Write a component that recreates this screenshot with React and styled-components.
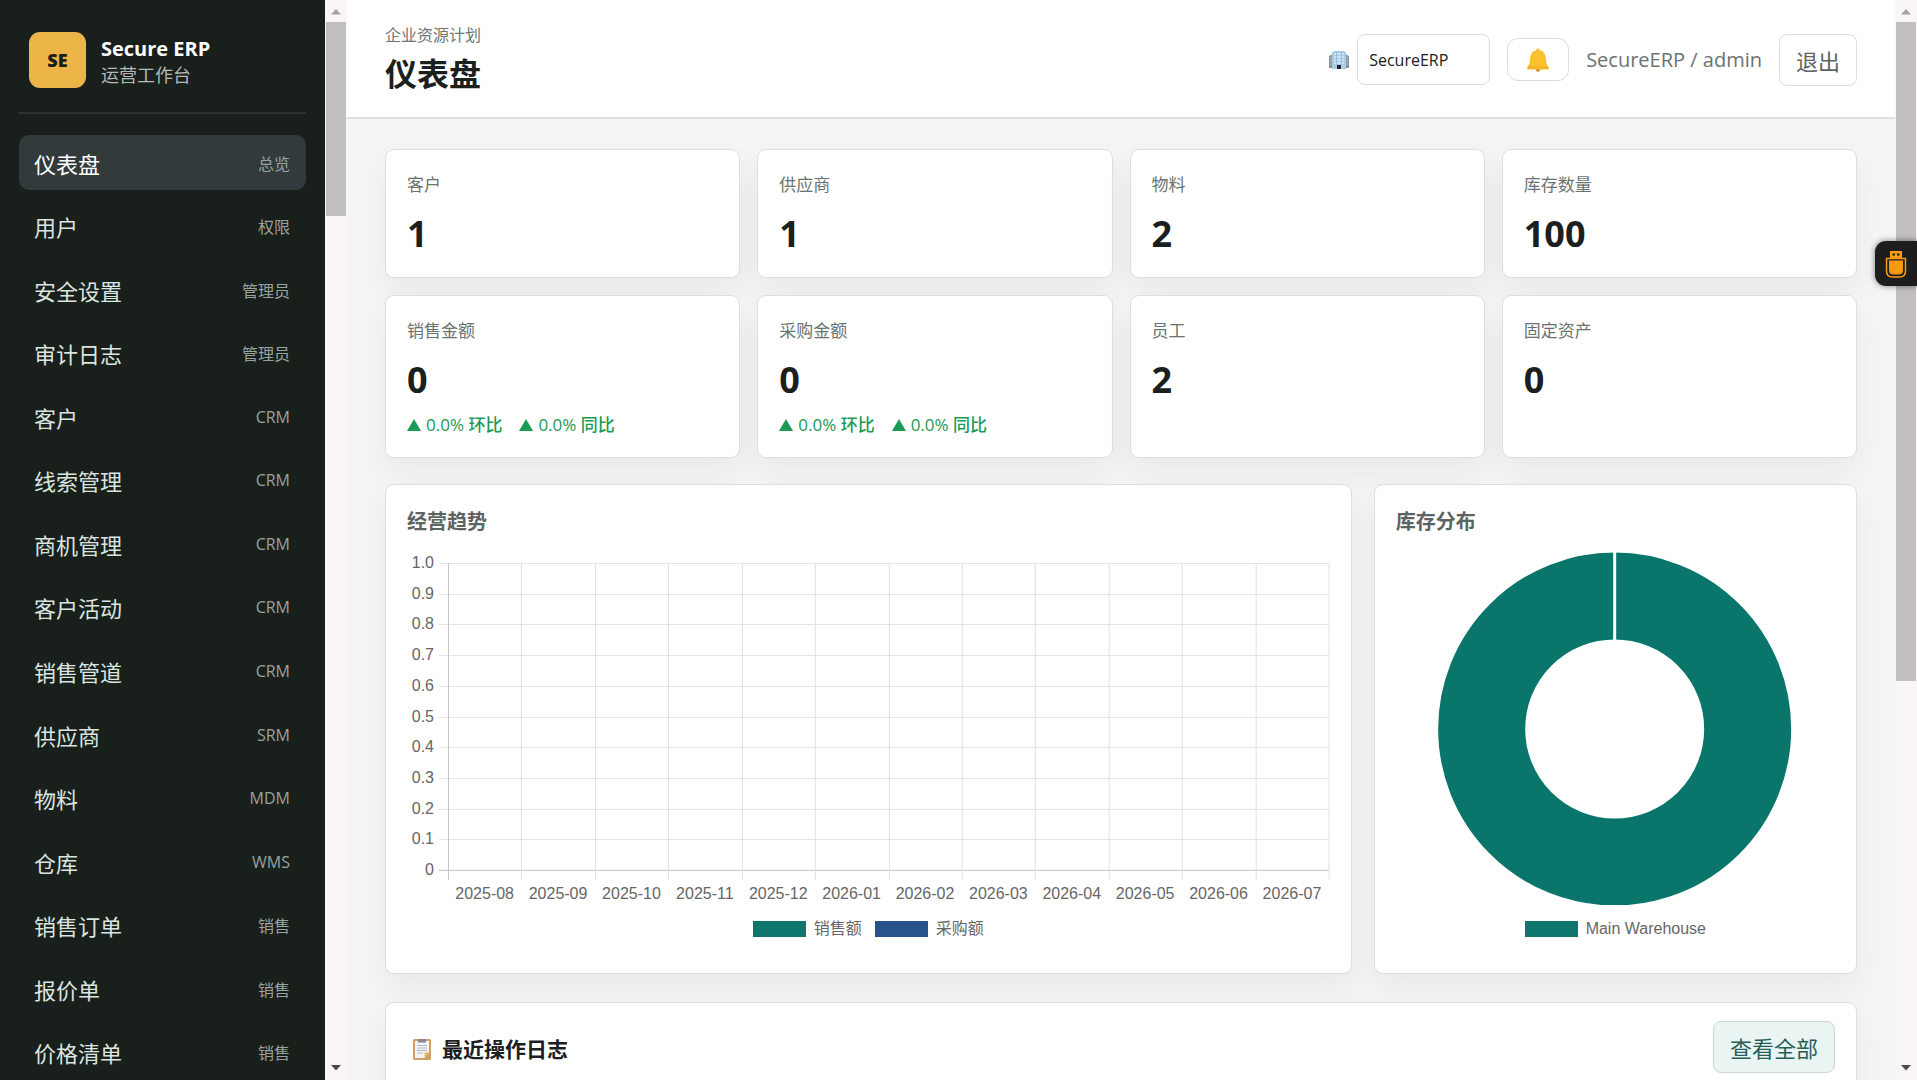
import React, { useState } from 'react';
import styled, { createGlobalStyle } from 'styled-components';

const GlobalStyle = createGlobalStyle`
  * {
    box-sizing: border-box;
  }

  body {
    margin: 0;
    background-color: #f6f5f6;
    color: #1b201e;
    font-family: 'Open Sans', 'Noto Sans CJK SC', sans-serif;
    font-size: 17px;
  }

  button,
  select {
    font-family: inherit;
  }
`;

const Shell = styled.div`
  display: flex;
  height: 100vh;
  overflow: hidden;
`;

const Sidebar = styled.aside`
  display: flex;
  flex-direction: column;
  flex: 0 0 325px;
  padding: 0 19px;
  background-color: #191f1a;
  overflow-y: auto;
  scrollbar-width: none;
`;

const Brand = styled.div`
  display: flex;
  align-items: center;
  gap: 15px;
  padding: 32px 10px 24px;
  border-bottom: 2px solid #2d332e;
  margin-bottom: 21px;
`;

const BrandMark = styled.div`
  display: flex;
  align-items: center;
  justify-content: center;
  width: 57px;
  height: 56px;
  border-radius: 11px;
  background-color: #edb548;
  color: #191f1a;
  font-size: 18px;
  font-weight: 800;
`;

const BrandText = styled.div`
  padding-top: 3px;
`;

const BrandName = styled.div`
  color: #fff;
  font-size: 20px;
  font-weight: 700;
  line-height: 27px;
`;

const BrandNote = styled.div`
  color: #b3bab6;
  font-size: 18px;
  line-height: 26px;
`;

const Nav = styled.nav`
  display: flex;
  flex: 1;
  flex-direction: column;
  justify-content: space-between;
`;

const NavItem = styled.a`
  display: flex;
  flex: 0 0 55px;
  align-items: center;
  justify-content: space-between;
  padding: 0 16px 0 15px;
  border-radius: 10px;
  background-color: ${({ $active }) => ($active ? '#333a3c' : 'transparent')};
  color: ${({ $active }) => ($active ? '#fff' : '#dbe5e0')};
  font-size: 22px;
  text-decoration: none;
`;

const NavTag = styled.span`
  color: #99a39e;
  font-size: 16px;
`;

const Track = styled.div`
  display: flex;
  flex: 0 0 22px;
  flex-direction: column;
  align-items: center;
  justify-content: space-between;
  background-color: #f9f5f9;
`;

const Thumb = styled.div`
  flex: 0 0 ${({ $size }) => $size};
  width: 20px;
  margin-bottom: auto;
  background-color: #c1bfc2;
`;

const Arrow = styled.svg`
  flex: 0 0 22px;
  width: 12px;
`;

const Main = styled.main`
  flex: 1;
  min-width: 0;
  overflow-y: auto;
  scrollbar-width: none;
`;

const Header = styled.header`
  display: flex;
  align-items: center;
  justify-content: space-between;
  height: 119px;
  padding: 0 38px;
  border-bottom: 2px solid #dfdfdf;
  background-color: #fff;
`;

const Eyebrow = styled.div`
  color: #6f7673;
  font-size: 16px;
  line-height: 24px;
`;

const PageTitle = styled.h1`
  margin: 6px 0 0;
  font-size: 32px;
  font-weight: 700;
  line-height: 42px;
`;

const Tools = styled.div`
  display: flex;
  align-items: center;
  gap: 17px;
  padding-top: 2px;
`;

const Company = styled.label`
  display: flex;
  align-items: center;
  gap: 8px;
`;

const CompanySelect = styled.select`
  width: 133px;
  height: 51px;
  padding: 0 11px;
  border: 1px solid #dcdcdc;
  border-radius: 8px;
  background-color: #fff;
  color: #1b201e;
  font-size: 16px;
  appearance: none;
`;

const Button = styled.button`
  display: flex;
  align-items: center;
  justify-content: center;
  height: ${({ $small }) => ($small ? '43px' : '52px')};
  padding: 0 ${({ $small }) => ($small ? '18px' : '16px')};
  border: 1px solid ${({ $tinted }) => ($tinted ? '#c9d8d6' : '#dcdcdc')};
  border-radius: ${({ $small }) => ($small ? '11px' : '8px')};
  background-color: ${({ $tinted }) => ($tinted ? '#eaf4f3' : '#fff')};
  color: ${({ $tinted }) => ($tinted ? '#255f57' : '#5d6461')};
  font-size: 22px;
  cursor: pointer;
`;

const UserName = styled.span`
  color: #6b7370;
  font-size: 20px;
`;

const Content = styled.div`
  padding: 30px 38px;
`;

const Card = styled.section`
  padding: 21px;
  border: 1px solid #dedede;
  border-radius: 9px;
  background-color: #fff;
  box-shadow: 0 14px 32px rgba(30, 30, 30, 0.06);
`;

const StatGrid = styled.div`
  display: grid;
  grid-template-columns: repeat(4, 1fr);
  gap: 17px;
`;

const StatLabel = styled.div`
  color: #6b7370;
  font-size: 17px;
  line-height: 27px;
`;

const StatValue = styled.div`
  margin-top: 13px;
  font-size: 36px;
  font-weight: 700;
  line-height: 45px;
`;

const Changes = styled.div`
  display: flex;
  gap: 17px;
  margin-top: 12px;
  color: #1a9a55;
  font-size: 17px;
  font-weight: 500;
  line-height: 22px;
`;

const Change = styled.span`
  display: flex;
  align-items: center;
  gap: 5px;
`;

const ChartGrid = styled.div`
  display: grid;
  grid-template-columns: 2fr 1fr;
  gap: 22px;
  margin: 26px 0 28px;
`;

const ChartCard = styled(Card)`
  padding-top: 22px;
  padding-bottom: 32px;
`;

const ChartTitle = styled.h2`
  margin: 0 0 12px;
  color: #5b6461;
  font-size: 20px;
  font-weight: 700;
  line-height: 30px;
`;

const Chart = styled.svg`
  display: block;
  width: 100%;
  height: ${({ $height }) => $height || 'auto'};
  fill: #666;
  font-family: 'Liberation Sans', sans-serif;
  font-size: 16px;
`;

const Legend = styled.div`
  display: flex;
  justify-content: center;
  gap: 13px;
  margin-top: 12px;
  color: #666;
  font-family: 'Liberation Sans', 'Noto Sans CJK SC', sans-serif;
  font-size: 16px;
  line-height: 24px;
`;

const LegendItem = styled.span`
  display: flex;
  align-items: center;
  gap: 8px;

  &::before {
    content: '';
    width: 53px;
    height: 16px;
    background-color: ${({ $color }) => $color};
  }
`;

const LogCard = styled(Card)`
  display: flex;
  align-items: flex-start;
  justify-content: space-between;
  min-height: 240px;
  padding-top: 18px;
`;

const LogTitle = styled.h2`
  display: flex;
  align-items: center;
  gap: 11px;
  margin: 0;
  padding-left: 6px;
  font-size: 21px;
  font-weight: 700;
  line-height: 56px;
`;

const FloatingTool = styled.button`
  position: fixed;
  top: 241px;
  right: 0;
  display: flex;
  align-items: center;
  width: 42px;
  height: 45px;
  padding: 0 0 0 10px;
  border: none;
  border-radius: 11px 0 0 11px;
  background-color: #1d1d1d;
  box-shadow: 0 0 6px rgba(0, 0, 0, 0.5);
  cursor: pointer;
`;

const navItems = [
  ['仪表盘', '总览'],
  ['用户', '权限'],
  ['安全设置', '管理员'],
  ['审计日志', '管理员'],
  ['客户', 'CRM'],
  ['线索管理', 'CRM'],
  ['商机管理', 'CRM'],
  ['客户活动', 'CRM'],
  ['销售管道', 'CRM'],
  ['供应商', 'SRM'],
  ['物料', 'MDM'],
  ['仓库', 'WMS'],
  ['销售订单', '销售'],
  ['报价单', '销售'],
  ['价格清单', '销售'],
];

const stats = [
  { label: '客户', value: '1' },
  { label: '供应商', value: '1' },
  { label: '物料', value: '2' },
  { label: '库存数量', value: '100' },
  { label: '销售金额', value: '0', changes: ['0.0% 环比', '0.0% 同比'] },
  { label: '采购金额', value: '0', changes: ['0.0% 环比', '0.0% 同比'] },
  { label: '员工', value: '2' },
  { label: '固定资产', value: '0' },
];

const months = [
  '2025-08', '2025-09', '2025-10', '2025-11', '2025-12', '2026-01',
  '2026-02', '2026-03', '2026-04', '2026-05', '2026-06', '2026-07',
];

const ticks = ['1.0', '0.9', '0.8', '0.7', '0.6', '0.5', '0.4', '0.3', '0.2', '0.1', '0'];

const Scrollbar = ({ size }) => (
  <Track aria-hidden="true">
    <Arrow viewBox="0 0 12 22">
      <path d="M1 14.500L6 9l5 5.500z" fill="#a5a2a6" />
    </Arrow>
    <Thumb $size={size} />
    <Arrow viewBox="0 0 12 22">
      <path d="M1 7L6 12.500L11 7z" fill="#4c494d" />
    </Arrow>
  </Track>
);

const BuildingIcon = () => (
  <svg width="20" height="20" viewBox="0 0 20 20" aria-hidden="true">
    <path d="M0 6l4-2v14H0zM20 6l-4-2v14h4z" fill="#87929c" />
    <path d="M3 2.500L5 1h10l2 1.500V19H3z" fill="#a9cbe6" />
    <path d="M5 4h10M5 7h10M5 10h10M5 13h10" stroke="#d9eaf6" strokeWidth="1.500" />
    <path d="M7.500 2v13M12.500 2v13" stroke="#8db4d3" strokeWidth="0.800" />
    <path d="M1 8h1.500M1 11h1.500M1 14h1.500M17.500 8H19M17.500 11H19M17.500 14H19" stroke="#c8d5de" />
    <path d="M8 15h4v4H8z" fill="#20242a" />
  </svg>
);

const BellIcon = () => (
  <svg width="24" height="24" viewBox="0 0 24 24" aria-hidden="true">
    <circle cx="12" cy="21.500" r="2.200" fill="#c8892b" />
    <path
      d="M12 .5c-1.200 0-1.800.8-1.800 1.700C6.500 3 4.500 6 4.300 9.500 4 14 3.500 16.500 1.500 19c-.9 1.200-.5 2.500.8 2.500h19.400c1.300 0 1.700-1.300.8-2.500-2-2.500-2.500-5-2.800-9.500C19.500 6 17.500 3 13.800 2.200c0-.9-.6-1.700-1.800-1.700z"
      fill="#fbc02d"
    />
    <path d="M2 18.800h20l.6 1.500H1.400z" fill="#f3ab27" />
  </svg>
);

const ClipboardIcon = () => (
  <svg width="18" height="22" viewBox="0 0 18 22" aria-hidden="true">
    <rect x="0" y="1" width="18" height="21" rx="1.500" fill="#d3a062" />
    <path d="M2 3h14v11.500L11.500 20H2z" fill="#f3f4f8" />
    <path d="M11.500 20v-5.500H16z" fill="#e9b765" />
    <path d="M5 1h8v3.500H5z" fill="#8b8790" />
    <path d="M4 7.500h10M4 10h10M4 12.500h10M4 15h6" stroke="#b2b5c2" />
  </svg>
);

const UsbIcon = () => (
  <svg width="22" height="28" viewBox="0 0 22 28" aria-hidden="true">
    <path d="M5 1h12v7H5z" fill="#f79a12" />
    <path d="M7.500 3.500h2.500v2H7.500zM12 3.500h2.500v2H12z" fill="#1d1d1d" />
    <path d="M1.500 8.500h19v12.500q0 6-6 6h-7q-6 0-6-6z" fill="none" stroke="#f79a12" strokeWidth="1.500" />
    <path d="M4 10.500h14V20q0 4.500-4.500 4.500h-5Q4 24.500 4 20z" fill="#f79a12" />
  </svg>
);

const TrendChart = () => {
  const left = 41;
  const right = 922;
  const top = 14;
  const bottom = 321;
  const stepX = (right - left) / months.length;
  const stepY = (bottom - top) / (ticks.length - 1);

  return (
    <Chart viewBox="0 0 923 356" role="img" aria-label="经营趋势">
      {ticks.map((tick, i) => {
        const y = Math.round(top + i * stepY) + 0.5;
        return (
          <g key={tick}>
            <path d={`M${left - 9} ${y}H${right}`} stroke={tick === '0' ? '#c4c4c4' : '#e4e4e4'} />
            <text x={left - 14} y={y + 5} textAnchor="end">{tick}</text>
          </g>
        );
      })}
      {[...months, 'end'].map((month, i) => {
        const x = Math.round(left + i * stepX) + 0.5;
        return <path key={month} d={`M${x} ${top}V${bottom + 10}`} stroke={i === 0 ? '#c4c4c4' : '#e0e0e0'} />;
      })}
      {months.map((month, i) => (
        <text key={month} x={left + (i + 0.5) * stepX} y={350} textAnchor="middle">{month}</text>
      ))}
    </Chart>
  );
};

const StockChart = () => (
  <Chart viewBox="0 0 438 356" $height="356px" role="img" aria-label="库存分布">
    <circle cx="218" cy="180" r="133" fill="none" stroke="#0a766b" strokeWidth="87" />
    <path d="M218 2v90" stroke="#fff" strokeWidth="3" />
  </Chart>
);

const App = () => {
  const [active, setActive] = useState('仪表盘');

  return (
    <>
      <GlobalStyle />
      <Shell>
        <Sidebar>
          <Brand>
            <BrandMark>SE</BrandMark>
            <BrandText>
              <BrandName>Secure ERP</BrandName>
              <BrandNote>运营工作台</BrandNote>
            </BrandText>
          </Brand>
          <Nav>
            {navItems.map(([name, tag]) => (
              <NavItem key={name} href="#" $active={name === active} onClick={() => setActive(name)}>
                {name}
                <NavTag>{tag}</NavTag>
              </NavItem>
            ))}
          </Nav>
        </Sidebar>
        <Scrollbar size="18%" />
        <Main>
          <Header>
            <div>
              <Eyebrow>企业资源计划</Eyebrow>
              <PageTitle>仪表盘</PageTitle>
            </div>
            <Tools>
              <Company>
                <BuildingIcon />
                <CompanySelect aria-label="公司">
                  <option>SecureERP</option>
                </CompanySelect>
              </Company>
              <Button $small aria-label="通知">
                <BellIcon />
              </Button>
              <UserName>SecureERP / admin</UserName>
              <Button>退出</Button>
            </Tools>
          </Header>
          <Content>
            <StatGrid>
              {stats.map(({ label, value, changes }) => (
                <Card key={label}>
                  <StatLabel>{label}</StatLabel>
                  <StatValue>{value}</StatValue>
                  {changes && (
                    <Changes>
                      {changes.map((change) => (
                        <Change key={change}>
                          <svg width="14" height="12" viewBox="0 0 14 12" aria-hidden="true">
                            <path d="M7 0l7 12H0z" fill="currentColor" />
                          </svg>
                          {change}
                        </Change>
                      ))}
                    </Changes>
                  )}
                </Card>
              ))}
            </StatGrid>
            <ChartGrid>
              <ChartCard>
                <ChartTitle>经营趋势</ChartTitle>
                <TrendChart />
                <Legend>
                  <LegendItem $color="#0f766e">销售额</LegendItem>
                  <LegendItem $color="#28538a">采购额</LegendItem>
                </Legend>
              </ChartCard>
              <ChartCard>
                <ChartTitle>库存分布</ChartTitle>
                <StockChart />
                <Legend>
                  <LegendItem $color="#0f766e">Main Warehouse</LegendItem>
                </Legend>
              </ChartCard>
            </ChartGrid>
            <LogCard>
              <LogTitle>
                <ClipboardIcon />
                最近操作日志
              </LogTitle>
              <Button $tinted>查看全部</Button>
            </LogCard>
          </Content>
        </Main>
        <Scrollbar size="61%" />
      </Shell>
      <FloatingTool aria-label="USB">
        <UsbIcon />
      </FloatingTool>
    </>
  );
};

export default App;
